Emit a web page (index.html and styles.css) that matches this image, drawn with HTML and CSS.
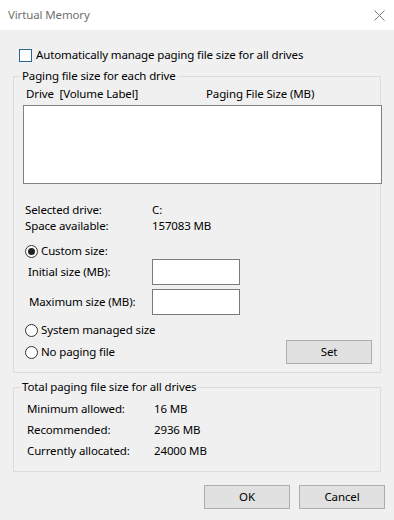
FILE: index.html
```html
<!DOCTYPE html>
<html lang="en">
<head>
<meta charset="utf-8">
<title>Virtual Memory</title>
<link rel="stylesheet" href="styles.css">
</head>
<body>
<div class="window">
  <div class="titlebar">
    <span class="title">Virtual Memory</span>
    <svg class="close" width="11" height="11" viewBox="0 0 11 11" aria-hidden="true">
      <path d="M0.5 0.5 L10.5 10.5 M10.5 0.5 L0.5 10.5" stroke="#7a7a7a" stroke-width="1" fill="none"/>
    </svg>
  </div>
  <div class="body">
    <div class="check-row"><span class="checkbox"></span><span>Automatically manage paging file size for all drives</span></div>

    <fieldset class="group group-drive">
      <legend>Paging file size for each drive</legend>
      <div class="list-head"><span class="col-drive">Drive&nbsp; [Volume Label]</span><span class="col-size">Paging File Size (MB)</span></div>
      <div class="listbox"></div>
      <div class="info">
        <span>Selected drive:</span><span>C:</span>
        <span>Space available:</span><span>157083 MB</span>
      </div>
      <div class="radio-row row-custom"><span class="radio checked"></span><span>Custom size:</span></div>
      <div class="field-row"><span class="field-label">Initial size (MB):</span><span class="textbox"></span></div>
      <div class="field-row row-max"><span class="field-label label-max">Maximum size (MB):</span><span class="textbox"></span></div>
      <div class="radio-row row-system"><span class="radio"></span><span>System managed size</span></div>
      <div class="radio-row row-none"><span class="radio"></span><span>No paging file</span><span class="button btn-set">Set</span></div>
    </fieldset>

    <fieldset class="group group-total">
      <legend>Total paging file size for all drives</legend>
      <div class="stats">
        <span>Minimum allowed:</span><span>16 MB</span>
        <span>Recommended:</span><span>2936 MB</span>
        <span>Currently allocated:</span><span>24000 MB</span>
      </div>
    </fieldset>

    <div class="actions">
      <span class="button btn-ok">OK</span>
      <span class="button btn-cancel">Cancel</span>
    </div>
  </div>
</div>
</body>
</html>
```

FILE: styles.css
```css
* { box-sizing: border-box; }
html, body { margin: 0; padding: 0; }
body {
  width: 394px;
  height: 520px;
  background: #f0f0f0;
  font-family: "Noto Sans", "Open Sans", sans-serif;
  font-size: 11.5px;
  letter-spacing: -0.13px;
  line-height: 16px;
  color: #000;
  overflow: hidden;
}
.window { width: 394px; height: 520px; background: #f0f0f0; }

.titlebar {
  height: 30px;
  background: #fff;
  display: flex;
  align-items: center;
  justify-content: space-between;
  padding: 0 9px 0 8px;
}
.title { color: #6f6f6f; }
.close { display: block; }

.body { padding: 0 0 0 13px; }

.check-row {
  margin: 17px 0 0 6px;
  display: flex;
  align-items: center;
  gap: 4px;
  height: 16px;
}
.checkbox {
  width: 13px;
  height: 13px;
  border: 1px solid #2b6590;
  background: #fff;
  flex: none;
}

.group {
  margin: 0;
  padding: 0;
  border: 1px solid #dcdcdc;
  width: 368px;
  min-width: 0;
}
.group legend {
  padding: 0 1px;
  margin-left: 7px;
  line-height: 16px;
}
.group-drive { margin-top: 5px; padding-bottom: 8px; }
.group-total { margin-top: 6px; padding-bottom: 10px; }

.list-head {
  margin: 2px 0 0 12px;
  display: flex;
}
.col-drive { width: 180px; }

.listbox {
  margin: 3px 0 0 9px;
  width: 359px;
  height: 79px;
  background: #fff;
  border: 1px solid #828282;
}

.info {
  margin: 18px 0 0 11px;
  display: grid;
  grid-template-columns: 127px auto;
}

.radio-row {
  margin-left: 11px;
  display: flex;
  align-items: center;
  gap: 3px;
  height: 16px;
}
.radio {
  width: 13px;
  height: 13px;
  border: 1px solid #333;
  border-radius: 50%;
  background: #fff;
  flex: none;
  display: flex;
  align-items: center;
  justify-content: center;
}
.radio.checked::after {
  content: "";
  width: 7px;
  height: 7px;
  border-radius: 50%;
  background: #222;
}
.row-custom { margin-top: 9px; }
.row-system { margin-top: 7px; }
.row-none { margin-top: 2px; height: 24px; margin-right: 8px; }

.field-row {
  margin-left: 14px;
  display: flex;
  align-items: center;
  height: 26px;
}
.row-max { margin-top: 4px; }
.field-label { width: 124px; }
.label-max { padding-left: 1px; }
.textbox {
  width: 88px;
  height: 26px;
  background: #fff;
  border: 1px solid #7a7a7a;
}

.button {
  display: flex;
  align-items: center;
  justify-content: center;
  width: 86px;
  height: 24px;
  background: #e1e1e1;
  border: 1px solid #adadad;
}
.btn-set { margin-left: auto; }

.stats {
  margin: 3px 0 0 13px;
  display: grid;
  grid-template-columns: 127px auto;
  line-height: 21px;
}

.actions {
  margin-top: 13px;
  display: flex;
  justify-content: flex-end;
  gap: 9px;
  padding-right: 9px;
}
```
